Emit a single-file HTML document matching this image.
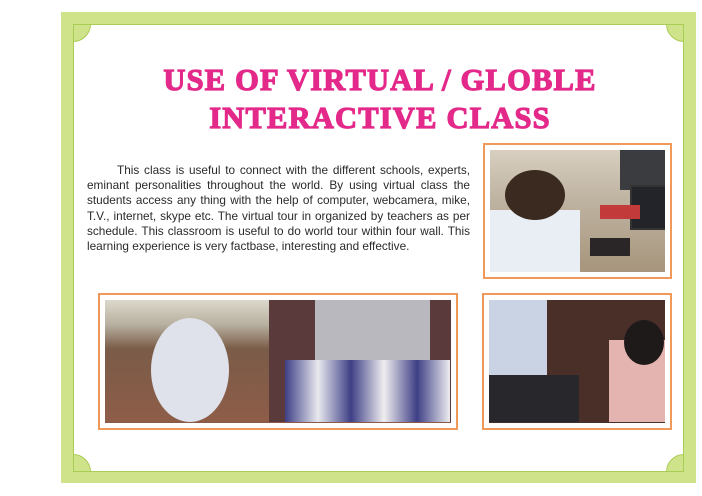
<!DOCTYPE html>
<html><head><style>
*{margin:0;padding:0;box-sizing:border-box}
body{width:702px;height:496px;background:#fff;position:relative;overflow:hidden;font-family:"Liberation Sans",sans-serif}
.outer{position:absolute;left:61px;top:12px;width:635px;height:471px;background:#cfe38a}
.inner{position:absolute;left:73px;top:24px;width:611px;height:448px;background:#fff;border:1.5px solid #a9cc55;overflow:hidden}
.c{position:absolute;width:36px;height:36px;border-radius:50%;background:#cfe38a;border:1.5px solid #a9cc55}
h1{position:absolute;left:100px;width:560px;top:61px;text-align:center;color:#e3298a;font-family:"Liberation Serif",serif;font-weight:900;font-size:30.5px;line-height:38px;letter-spacing:1.2px;-webkit-text-stroke:1.2px #e3298a}
p{position:absolute;left:87px;top:163px;width:383px;font-size:11.8px;line-height:15.2px;color:#2a2a2a;text-align:justify;text-indent:30px}
.f{position:absolute;border:2px solid #ef9a5a;background:#fff;padding:5px}
.f>div{width:100%;height:100%;position:relative;overflow:hidden}
</style></head><body>
<div class="outer"></div>
<div class="inner">
<div class="c" style="left:-19px;top:-19px"></div>
<div class="c" style="right:-19px;top:-19px"></div>
<div class="c" style="left:-19px;bottom:-19px"></div>
<div class="c" style="right:-19px;bottom:-19px"></div>
</div>
<h1>USE OF VIRTUAL / GLOBLE<br>INTERACTIVE CLASS</h1>
<p>This class is useful to connect with the different schools, experts, eminant personalities throughout the world. By using virtual class the students access any thing with the help of computer, webcamera, mike, T.V., internet, skype etc. The virtual tour in organized by teachers as per schedule. This classroom is useful to do world tour within four wall. This learning experience is very factbase, interesting and effective.</p>

<div class="f" style="left:483px;top:143px;width:189px;height:136px"><div style="background:linear-gradient(180deg,#d8cfc0 0%,#bfb4a2 40%,#a7957c 100%)">
<div style="position:absolute;left:0;top:60px;width:90px;height:70px;background:#e9eef4"></div>
<div style="position:absolute;left:15px;top:20px;width:60px;height:50px;border-radius:50%;background:#3a2a20"></div>
<div style="position:absolute;left:130px;top:0;width:50px;height:40px;background:#3b3c40"></div>
<div style="position:absolute;left:140px;top:35px;width:38px;height:45px;background:#22242a;border:2px solid #333"></div>
<div style="position:absolute;left:110px;top:55px;width:40px;height:14px;background:#c23a3a"></div>
<div style="position:absolute;left:100px;top:88px;width:40px;height:18px;background:#2a2628"></div>
</div></div>

<div class="f" style="left:98px;top:293px;width:360px;height:137px"><div style="background:#8b5a45">
<div style="position:absolute;left:0;top:0;width:164px;height:122px;background:linear-gradient(180deg,#dcd9cc 0%,#b8b0a0 20%,#7a5c48 40%,#8e5d48 100%)"></div>
<div style="position:absolute;left:46px;top:18px;width:78px;height:104px;border-radius:50%;background:#dfe2ea"></div>
<div style="position:absolute;left:164px;top:0;width:183px;height:122px;background:#5a3a3a"></div>
<div style="position:absolute;left:210px;top:0;width:115px;height:80px;background:#b9b8bf"></div>
<div style="position:absolute;left:180px;top:60px;width:165px;height:62px;background:linear-gradient(90deg,#3e3f86,#e9e9ef,#3e3f86,#f0eef0,#3e3f86,#ededf0)"></div>
</div></div>

<div class="f" style="left:482px;top:293px;width:190px;height:137px"><div style="background:#4a2e28">
<div style="position:absolute;left:0;top:0;width:58px;height:75px;background:#c9d3e4"></div>
<div style="position:absolute;left:0;top:75px;width:90px;height:47px;background:#28282c"></div>
<div style="position:absolute;left:120px;top:40px;width:58px;height:82px;background:#e4b4b0"></div>
<div style="position:absolute;left:135px;top:20px;width:40px;height:45px;border-radius:50%;background:#1e1a1a"></div>
</div></div>
</body></html>
